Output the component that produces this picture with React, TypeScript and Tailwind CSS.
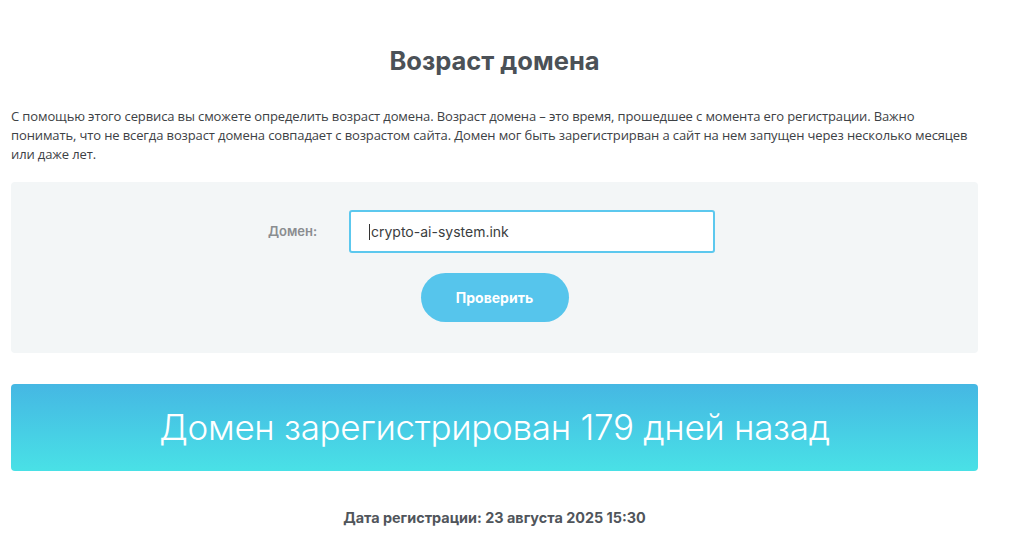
import React from 'react';

export default function App() {
  return (
    <div className="min-h-screen bg-white">
      <div className="w-[967px] ml-[11px] pt-[44px]">
        <h1 className="text-center font-['Inter',sans-serif] font-bold text-[25.5px] leading-[34px] text-[#4b5157]">
          Возраст домена
        </h1>
        <p className="mt-[29px] font-['Open_Sans',sans-serif] text-[13px] tracking-[-0.12px] leading-[19px] text-[#3d4145]">
          С помощью этого сервиса вы сможете определить возраст домена. Возраст домена – это время, прошедшее с момента его регистрации. Важно понимать, что не всегда возраст домена совпадает с возрастом сайта. Домен мог быть зарегистрирван а сайт на нем запущен через несколько месяцев или даже лет.
        </p>
        <div className="mt-[18px] h-[171px] bg-[#f3f6f7] rounded-[4px] flex flex-col items-center pt-[28px]">
          <div className="flex items-center mr-[6px]">
            <label className="w-[81px] font-['Inter',sans-serif] font-semibold text-[13px] text-[#8a8d90]">
              Домен:
            </label>
            <div className="w-[366px] h-[43px] border-2 border-[#5cc8ee] rounded-[3px] bg-white flex items-center pl-[18px] font-['Inter',sans-serif] text-[14px] text-[#3a3d40]">
              <span className="border-l border-[#333] pl-[1px] leading-[16px]">crypto-ai-system.ink</span>
            </div>
          </div>
          <button className="mt-[20px] w-[148px] h-[49px] rounded-full bg-[#56c5ec] text-white font-['Inter',sans-serif] font-bold text-[14px]">
            Проверить
          </button>
        </div>
        <div className="mt-[31px] h-[87px] rounded-[4px] bg-gradient-to-b from-[#45b7e3] to-[#49e1e6] flex items-center justify-center">
          <span className="font-['Inter',sans-serif] font-light text-[35px] tracking-[-0.3px] text-white">
            Домен зарегистрирован 179 дней назад
          </span>
        </div>
        <p className="mt-[36px] text-center font-['Inter',sans-serif] font-bold text-[14.4px] text-[#50555b]">
          Дата регистрации: 23 августа 2025 15:30
        </p>
      </div>
    </div>
  );
}
